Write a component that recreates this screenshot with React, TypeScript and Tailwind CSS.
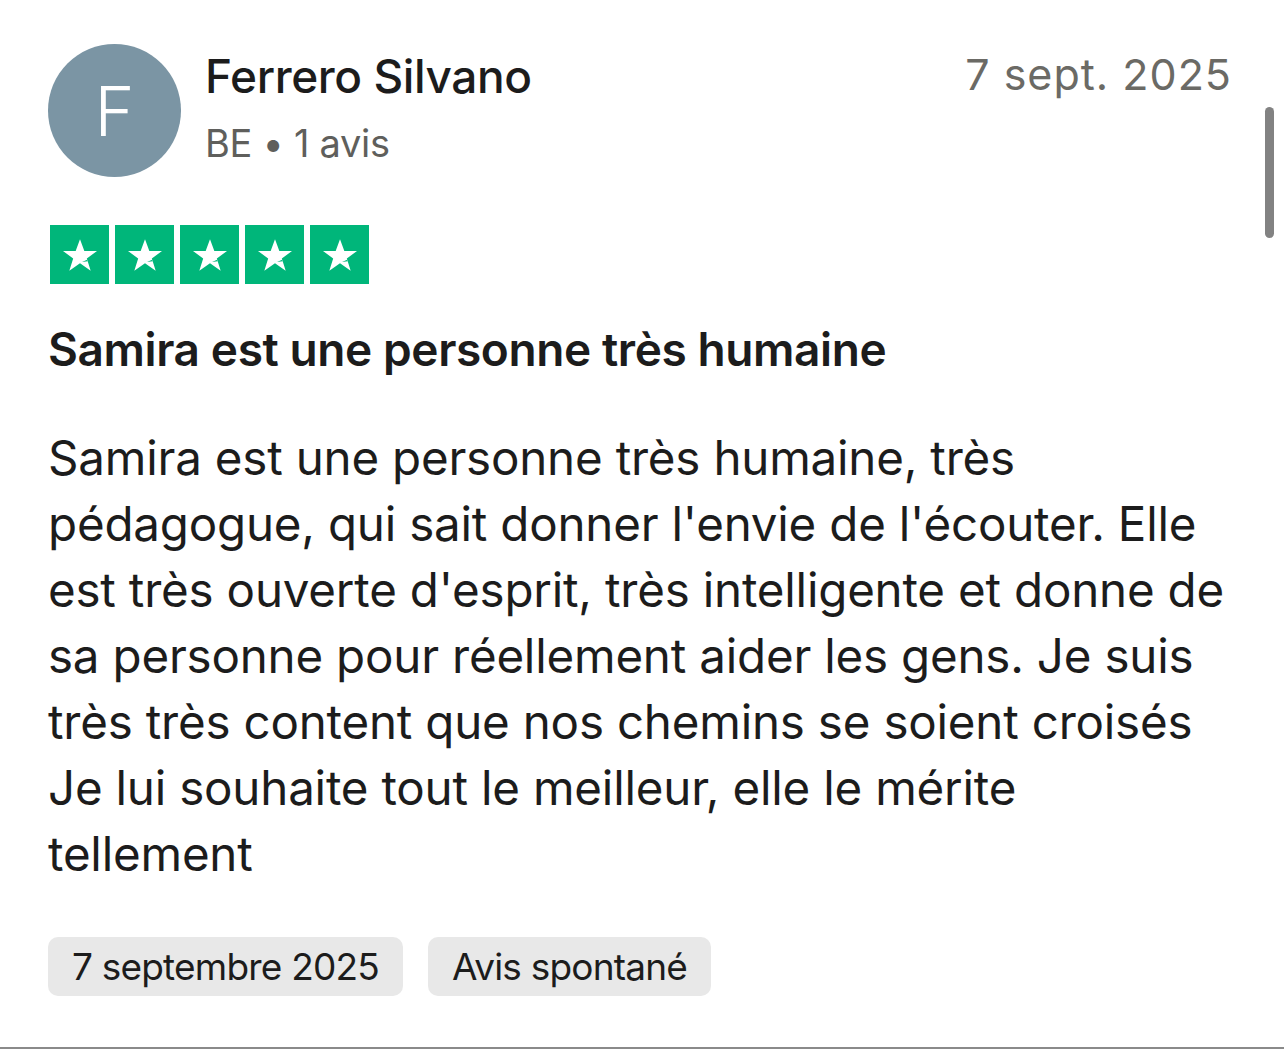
function TrustStar() {
  return (
    <div className="w-[59px] h-[59px] bg-[#00b67a] flex items-center justify-center">
      <svg viewBox="0 0 24 24" className="w-[40px] h-[40px]" fill="white">
        <path d="M12 2.5l2.6 7.1h7.6l-6.1 4.5 2.3 7.3L12 16.9l-6.4 4.5 2.3-7.3-6.1-4.5h7.6z" />
        <path d="M13.2 16.2l3.1-1.4 0.3 1z" fill="#00b67a" />
      </svg>
    </div>
  );
}

export default function App() {
  const body =
    "Samira est une personne très humaine, très pédagogue, qui sait donner l'envie de l'écouter. Elle est très ouverte d'esprit, très intelligente et donne de sa personne pour réellement aider les gens. Je suis très très content que nos chemins se soient croisés Je lui souhaite tout le meilleur, elle le mérite tellement";

  return (
    <div className="relative w-[1284px] h-[1049px] bg-white overflow-hidden font-['Inter',sans-serif] text-[#1c1c1c]">
      <div className="pl-[48px] pr-[52px] pt-[44px]">
        {/* header */}
        <div className="flex items-start">
          <div className="w-[133px] h-[133px] rounded-full bg-[#7b95a4] flex items-center justify-center text-white text-[68px] font-light">
            F
          </div>
          <div className="ml-[24px] flex-1 pt-[6px]">
            <div className="text-[46px] font-medium leading-[52px] tracking-[-0.4px]">Ferrero Silvano</div>
            <div className="text-[38px] leading-[50px] text-[#5f5f5c] mt-[16px] tracking-[-0.3px]">BE • 1 avis</div>
          </div>
          <div className="pt-[4px] text-[43px] leading-[52px] text-[#6b6a65] tracking-[1px]">7 sept. 2025</div>
        </div>

        {/* stars */}
        <div className="flex gap-[6px] mt-[48px] ml-[2px]">
          {[1, 2, 3, 4, 5].map((s) => (
            <TrustStar key={s} />
          ))}
        </div>

        <h2 className="mt-[39px] text-[46px] font-semibold leading-[52px] tracking-[-0.4px]">
          Samira est une personne très humaine
        </h2>

        <p className="mt-[50px] w-[1184px] text-[47.5px] leading-[66px] tracking-[-0.2px]">{body}</p>

        <div className="flex gap-[25px] mt-[50px]">
          <span className="h-[59px] px-[24px] flex items-center rounded-[10px] bg-[#e8e8e8] text-[37px] tracking-[-0.8px]">
            7 septembre 2025
          </span>
          <span className="h-[59px] px-[24px] flex items-center rounded-[10px] bg-[#e8e8e8] text-[37px] tracking-[-0.8px]">
            Avis spontané
          </span>
        </div>
      </div>

      {/* scrollbar */}
      <div className="absolute right-[10px] top-[107px] w-[9px] h-[131px] rounded-full bg-[#828282]" />
      <div className="absolute left-0 right-0 bottom-0 h-[2px] bg-[#8a8a8a]" />
    </div>
  );
}
